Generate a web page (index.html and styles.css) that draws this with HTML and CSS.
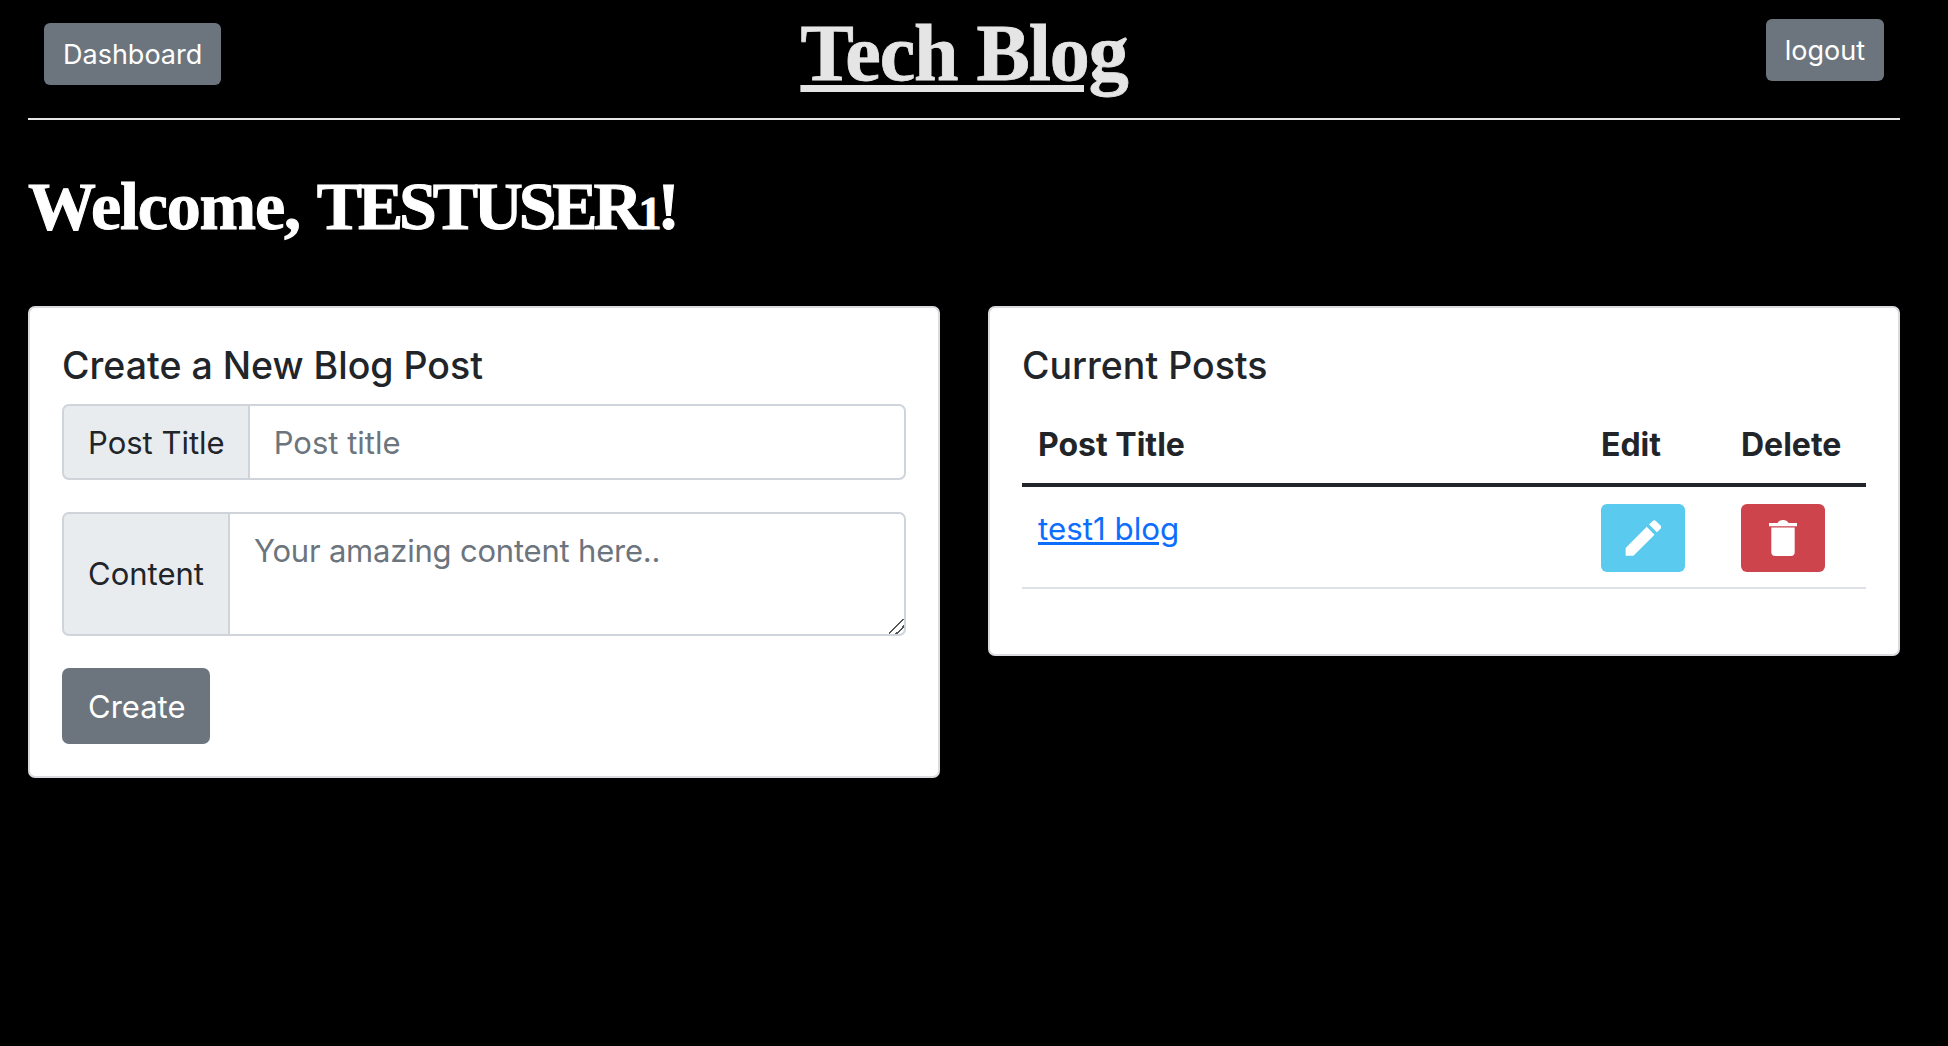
FILE: index.html
```html
<!DOCTYPE html>
<html lang="en">
<head>
<meta charset="utf-8">
<title>Tech Blog</title>
<link rel="stylesheet" href="styles.css">
</head>
<body>
<header class="site-header">
  <a class="btn btn-nav btn-dash" href="#">Dashboard</a>
  <h1 class="site-title"><a href="#">Tech Blog</a></h1>
  <a class="btn btn-nav btn-logout" href="#">logout</a>
</header>
<hr class="rule">
<h2 class="welcome"><span class="greet">Welcome,</span> <span class="user">TESTUSER<span class="oldstyle">1</span>!</span></h2>
<main class="columns">
  <section class="card">
    <h3 class="card-title">Create a New Blog Post</h3>
    <div class="input-group title-group">
      <label class="addon">Post Title</label>
      <input class="control" type="text" placeholder="Post title">
    </div>
    <div class="input-group content-group">
      <label class="addon">Content</label>
      <textarea class="control area" placeholder="Your amazing content here.."></textarea>
    </div>
    <button class="btn btn-create">Create</button>
  </section>
  <section class="card card-posts">
    <h3 class="card-title">Current Posts</h3>
    <table class="posts">
      <thead>
        <tr><th class="col-title">Post Title</th><th class="col-edit">Edit</th><th class="col-delete">Delete</th></tr>
      </thead>
      <tbody>
        <tr>
          <td class="cell-link"><a class="post-link" href="#">test1 blog</a></td>
          <td><button class="icon-btn edit" aria-label="Edit">
            <svg viewBox="1.6 0.4 13.8 13.9" width="36" height="36"><path d="M12.15.85a1 1 0 0 1 1.41 0l1.6 1.6a1 1 0 0 1 0 1.41l-1.3 1.3-3-3zM9.95 3.05l3 3L4.8 14.2H1.8v-3z" fill="#fff"/></svg>
          </button></td>
          <td><button class="icon-btn del" aria-label="Delete">
            <svg viewBox="0 0 28 36" width="28" height="36"><path d="M0 3h8.500Q10 0 14 0t5.500 3H28v3.200H0zM2.300 7.500h23.400V32a4 4 0 0 1-4 4H6.300a4 4 0 0 1-4-4z" fill="#fff"/></svg>
          </button></td>
        </tr>
      </tbody>
    </table>
  </section>
</main>
</body>
</html>
```
FILE: styles.css
```css
* { box-sizing: border-box; }
html, body { margin: 0; }
body {
  background: #000;
  min-height: 1046px;
  padding: 0 48px 0 28px;
  font-family: Inter, "Liberation Sans", sans-serif;
  font-size: 31px;
  line-height: 1.5;
  color: #212529;
}
.btn {
  display: inline-block;
  background: #6c757d;
  color: #fff;
  border: 0;
  border-radius: 6px;
  font-family: inherit;
  text-decoration: none;
}
.site-header {
  display: grid;
  grid-template-columns: 1fr auto 1fr;
  align-items: start;
  height: 118px;
}
.btn-nav {
  font-size: 27px;
  line-height: 38px;
  padding: 13px 19px 11px;
  height: 62px;
}
.btn-dash { margin: 23px 0 0 16px; justify-self: start; }
.btn-logout { margin: 19px 16px 0 0; justify-self: end; }
.site-title {
  margin: 0;
  font-family: "Liberation Serif", serif;
  font-weight: 700;
  font-size: 80px;
  letter-spacing: -1.1px;
  line-height: 106px;
  -webkit-text-stroke: 0.8px #e5e5e5;
}
.site-title a {
  color: #e5e5e5;
  text-decoration-thickness: 7px;
  text-underline-offset: 5px;
}
.rule { border: 0; border-top: 2px solid #e5e5e5; margin: 0; }
.welcome {
  margin: 44px 0 0;
  font-family: "Liberation Serif", serif;
  font-weight: 700;
  font-size: 68px;
  line-height: 84px;
  color: #fff;
  -webkit-text-stroke: 1px #fff;
}
.greet { letter-spacing: -1.2px; }
.user { letter-spacing: -4.2px; }
.oldstyle { font-size: 46px; }
.columns {
  display: grid;
  grid-template-columns: 912px 912px;
  gap: 48px;
  align-items: start;
  margin-top: 50px;
}
.card {
  background: #fff;
  border: 2px solid #d9dbde;
  border-radius: 7px;
  padding: 32px 32px 32px;
  height: 472px;
}
.card-posts { height: 350px; }
.card-title {
  margin: 0 0 12px;
  font-size: 37.5px;
  line-height: 52px;
  font-weight: 500;
}
.input-group { display: flex; width: 844px; }
.title-group { height: 76px; margin-bottom: 32px; }
.content-group { height: 124px; margin-bottom: 32px; }
.addon {
  display: flex;
  align-items: center;
  padding: 2px 23px 0 24px;
  background: #e9ecef;
  border: 2px solid #ced4da;
  border-radius: 7px 0 0 7px;
  flex: none;
}
.content-group .addon { padding: 0 24px; }
.control {
  flex: 1;
  min-width: 0;
  margin-left: -2px;
  padding: 2px 24px 0 24px;
  font: inherit;
  color: #212529;
  border: 2px solid #ced4da;
  border-radius: 0 7px 7px 0;
  outline: 0;
  background: #fff;
}
.control::placeholder { color: #6c757d; opacity: 1; }
.area {
  padding: 14px 24px 0 24px;
  display: block;
  resize: vertical;
}
.area::placeholder { letter-spacing: -0.2px; }
.area::-webkit-resizer {
  background: linear-gradient(135deg, transparent 44%, #555 44% 52%, transparent 52% 70%, #555 70% 78%, transparent 78%);
}
.btn-create {
  font-size: 31px;
  line-height: 76px;
  padding: 1px 24px 0 26px;
  height: 76px;
  border-radius: 7px;
}
.posts { width: 844px; border-collapse: collapse; table-layout: fixed; margin-top: 0; }
.posts th {
  text-align: left;
  font-size: 32px;
  font-weight: 700;
  padding: 14px 16px 12px;
  height: 81px;
  border-bottom: 4px solid #212529;
}
.col-title { width: 579px; padding-left: 16px; }
.col-edit { width: 140px; padding-left: 0; }
.posts th.col-edit, .posts th.col-delete { padding-left: 0; padding-right: 0; }
.col-delete { width: 125px; }
.posts td {
  padding: 17px 16px 15px 16px;
  vertical-align: top;
  border-bottom: 2px solid #dee2e6;
  height: 102px;
}
.posts td + td { padding-left: 0; padding-right: 0; }
.posts .cell-link { padding-top: 19px; font-size: 31.3px; }
.post-link { color: #0d6efd; }
.icon-btn {
  display: flex;
  align-items: center;
  justify-content: center;
  width: 84px;
  height: 68px;
  padding: 0;
  border: 0;
  border-radius: 6px;
}
.edit { background: #5bcaef; }
.del { background: #cd444c; }
```
